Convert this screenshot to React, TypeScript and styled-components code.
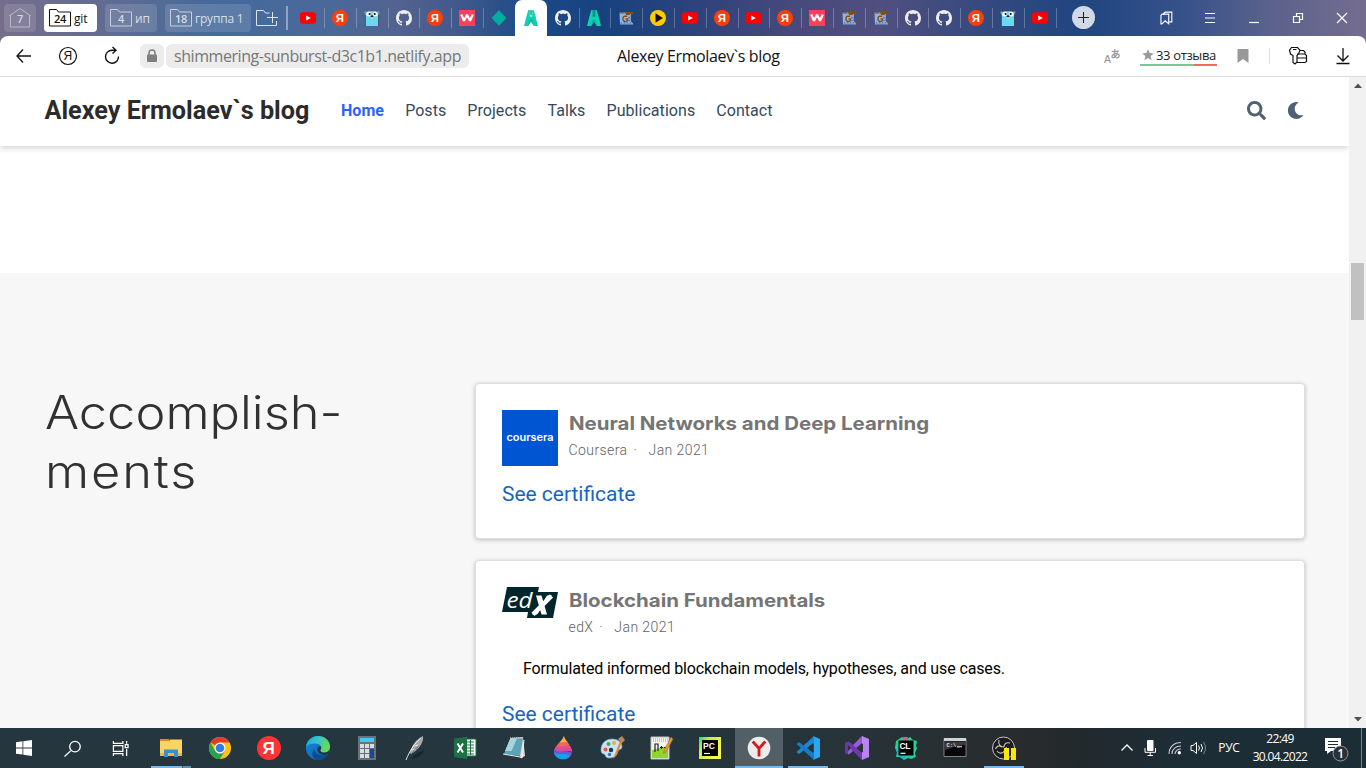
import React from "react";
import styled, { createGlobalStyle } from "styled-components";

const GlobalStyle = createGlobalStyle`
  * { box-sizing: border-box; }
  body { margin: 0; overflow: hidden; background: #fff; }
  svg { display: block; flex: none; overflow: visible; }
`;

const uiFont = `"Open Sans", "Noto Sans", sans-serif`;

const Screen = styled.div`
  width: 1366px;
  height: 768px;
  display: flex;
  flex-direction: column;
  overflow: hidden;
  font-family: ${uiFont};
  background: linear-gradient(90deg, #766e8b 0, #626c92 100px, #446a9c 220px, #4a699a 330px, #53628f 400px,
    #40598d 460px, #1c4a86 530px, #17427f 600px, #2c427b 690px, #484a7c 800px, #504f7f 880px, #364a7f 980px,
    #20457f 1080px, #35518a 1180px, #5b628c 1270px, #746d90 1366px);
`;

/* ---------- tab strip ---------- */

const TabStrip = styled.header`
  height: 36px;
  flex: none;
  display: flex;
  align-items: flex-start;
  padding-left: 4px;
`;

const Group = styled.div<{ $w: number; $gap: number; $active?: boolean }>`
  width: ${(p) => p.$w}px;
  height: 28px;
  margin: 4px ${(p) => p.$gap}px 0 0;
  padding-left: 4px;
  border-radius: 4px;
  display: flex;
  align-items: center;
  gap: 2px;
  flex: none;
  white-space: nowrap;
  background: ${(p) => (p.$active ? "#fff" : "rgba(255,255,255,.13)")};
  color: ${(p) => (p.$active ? "#111" : "rgba(255,255,255,.75)")};
  font-size: 12px;
  letter-spacing: -0.2px;
`;

const StripDivider = styled.div`
  width: 2px;
  height: 24px;
  margin: 6px 4.2px 0 8px;
  background: rgba(255, 255, 255, 0.4);
`;

const NewGroup = styled.div`
  padding-top: 10px;
`;

const Tab = styled.div<{ $active?: boolean; $line?: boolean }>`
  width: 31.82px;
  height: ${(p) => (p.$active ? 36 : 24)}px;
  margin-top: ${(p) => (p.$active ? 0 : 6)}px;
  padding-top: ${(p) => (p.$active ? 6 : 0)}px;
  flex: none;
  display: flex;
  justify-content: center;
  align-items: ${(p) => (p.$active ? "flex-start" : "center")};
  position: relative;
  border-radius: 7px 7px 0 0;
  background: ${(p) => (p.$active ? "#fff" : "none")};
  svg { margin-top: ${(p) => (p.$active ? 4 : 0)}px; }
  &::after {
    content: "";
    position: absolute;
    right: -1px;
    top: 2px;
    width: 1px;
    height: 20px;
    background: ${(p) => (p.$line ? "rgba(255,255,255,.25)" : "none")};
  }
`;

const AddTab = styled.div`
  width: 23px;
  height: 23px;
  margin: 6px 0 0 16.500px;
  border-radius: 50%;
  background: #d2d9e6;
  display: grid;
  place-items: center;
`;

const WindowButtons = styled.div`
  margin-left: auto;
  height: 36px;
  display: flex;
  padding-right: 2px;
`;

const WindowButton = styled.div`
  width: 44px;
  display: grid;
  place-items: center;
`;

/* ---------- address bar ---------- */

const Toolbar = styled.div`
  height: 41px;
  flex: none;
  background: #fff;
  border-radius: 8px 8px 0 0;
  border-bottom: 1px solid #dcdcdc;
  display: grid;
  grid-template-columns: 1fr auto 1fr;
  align-items: center;
`;

const ToolSide = styled.div<{ $end?: boolean }>`
  display: flex;
  align-items: center;
  height: 40px;
  justify-content: ${(p) => (p.$end ? "flex-end" : "flex-start")};
`;

const Tool = styled.div<{ $w?: number; $end?: number }>`
  width: ${(p) => p.$w ?? 44}px;
  margin-right: ${(p) => p.$end ?? 0}px;
  display: grid;
  place-items: center;
`;

const LockBox = styled.div`
  width: 24px;
  height: 24px;
  margin: 0 2px 0 6px;
  border-radius: 6px;
  background: #ececec;
  display: grid;
  place-items: center;
`;

const Url = styled.div`
  width: 303px;
  height: 24px;
  line-height: 24px;
  padding-left: 8px;
  border-radius: 6px;
  background: #ececec;
  color: #777;
  font-size: 16px;
  letter-spacing: -0.44px;
  white-space: nowrap;
`;

const PageTitle = styled.div`
  width: 164px;
  font-size: 16px;
  letter-spacing: -0.38px;
  color: #111;
  white-space: nowrap;
  margin-left: 32px;
`;

const Reviews = styled.div`
  width: 77px;
  height: 20px;
  display: flex;
  align-items: center;
  gap: 2px;
  padding-left: 2px;
  font-size: 13px;
  letter-spacing: -0.35px;
  color: #222;
  white-space: nowrap;
  border-bottom: 2px solid;
  border-image: linear-gradient(90deg, #78c796 70%, #ee6a5c 70%) 1;
`;

const ToolDivider = styled.div`
  width: 1px;
  height: 16px;
  background: #ddd;
`;

/* ---------- page ---------- */

const Viewport = styled.div`
  height: 651px;
  flex: none;
  display: flex;
  background: #fff;
  font-family: Roboto, sans-serif;
`;

const Page = styled.div`
  width: 1349px;
  height: 651px;
  overflow: hidden;
`;

const Navbar = styled.nav`
  position: relative;
  height: 69px;
  padding: 0 45px 2px 44.500px;
  display: flex;
  align-items: center;
  background: #fff;
  box-shadow: 0 2px 6px rgba(0, 0, 0, 0.18);
`;

const Brand = styled.div`
  width: 296.500px;
  font-size: 25.200px;
  font-weight: 700;
  color: #2b2b2b;
  white-space: nowrap;
`;

const NavLink = styled.a<{ $active?: boolean }>`
  margin-right: 21.100px;
  font-size: 16px;
  letter-spacing: 0.05px;
  font-weight: ${(p) => (p.$active ? 700 : 400)};
  color: ${(p) => (p.$active ? "#2962ff" : "#34495e")};
`;

const NavIcons = styled.div`
  margin-left: auto;
  display: flex;
  align-items: center;
  gap: 21px;
`;

const Section = styled.section`
  margin-top: 127px;
  height: 600px;
  padding: 110px 44px 0 45px;
  background: #f7f7f7;
  display: grid;
  grid-template-columns: 430px 830px;
`;

const Heading = styled.h1`
  margin: 0;
  font: 300 46px/59px Inter, sans-serif;
  color: #313131;
`;

const HeadingLine = styled.span<{ $spacing: number }>`
  display: block;
  width: 300px;
  letter-spacing: ${(p) => p.$spacing}px;
  transform: scaleX(1.1);
  transform-origin: left;
`;

const Cards = styled.div`
  display: flex;
  flex-direction: column;
  gap: 21px;
`;

const Card = styled.article<{ $h: number }>`
  height: ${(p) => p.$h}px;
  padding: 26px;
  background: #fff;
  border: 1px solid #dedede;
  border-radius: 4px;
  box-shadow: 0 1px 4px rgba(0, 0, 0, 0.24);
`;

const CardHead = styled.div`
  display: flex;
  gap: 10.500px;
  height: 56px;
`;

const CardTitle = styled.h4`
  margin: 2px 0 5px;
  font: 700 18.500px/23px Inter, sans-serif;
  color: #757575;
  white-space: nowrap;
  transform: scaleX(1.105);
  transform-origin: left;
`;

const Meta = styled.div`
  display: flex;
  font-size: 14px;
  line-height: 20px;
  letter-spacing: 0.42px;
  font-weight: 300;
  color: #626262;
`;

const Dot = styled.span`
  width: 21px;
  padding-left: 6px;
`;

const Description = styled.p`
  margin: 14px 0 0 21px;
  font-size: 16px;
  line-height: 24px;
  letter-spacing: -0.125px;
  color: #000;
`;

const CertLink = styled.a<{ $top: number }>`
  display: block;
  margin-top: ${(p) => p.$top}px;
  font-size: 20.950px;
  line-height: 30px;
  color: #1565c0;
`;

const Scrollbar = styled.div`
  width: 17px;
  background: #f1f1f1;
  display: flex;
  flex-direction: column;
  align-items: center;
  justify-content: space-between;
  padding: 6px 0;
`;

const Thumb = styled.div`
  width: 13px;
  height: 57px;
  margin: 0 0 223px;
  background: #c1c1c1;
`;

/* ---------- taskbar ---------- */

const Taskbar = styled.footer`
  height: 40px;
  flex: none;
  display: flex;
  color: #fff;
  background: linear-gradient(90deg, #26363f 0, #25363e 640px, #273338 860px, #282b2c 1030px, #22292d 1080px, #1d2d36 1180px, #1d2d36 100%);
`;

const SystemButtons = styled.div`
  display: flex;
  width: 147px;
`;

const Apps = styled.div`
  display: flex;
  gap: 1px;
`;

const TaskButton = styled.div<{ $bg?: boolean; $line?: "full" | "short" | "split" }>`
  position: relative;
  width: 48px;
  height: 40px;
  flex: none;
  display: grid;
  place-items: center;
  background: ${(p) => (p.$bg ? "#525f67" : "none")};
  &::after {
    content: "";
    position: absolute;
    bottom: 0;
    left: ${(p) => (p.$line === "full" ? 0 : 4)}px;
    right: ${(p) => (p.$line === "full" ? 0 : 4)}px;
    height: ${(p) => (p.$line ? 2 : 0)}px;
    background: ${(p) => (p.$line === "split" ? "linear-gradient(90deg,#76b9ed 31px,#3c5b70 31px,#3c5b70 32px,#5c90b5 32px)" : "#76b9ed")};
  }
`;

const Tray = styled.div`
  margin-left: auto;
  display: flex;
  align-items: center;
  font-size: 12px;
`;

const TrayItem = styled.div<{ $w: number; $tight?: boolean }>`
  width: ${(p) => p.$w}px;
  display: grid;
  place-items: center;
  letter-spacing: ${(p) => (p.$tight ? -0.65 : -0.3)}px;
  text-align: center;
  line-height: 18px;
  white-space: nowrap;
`;

const ShowDesktop = styled.div`
  width: 5px;
  height: 40px;
  border-left: 1px solid #77838a;
`;

/* ---------- drawings ---------- */

const YouTube = () => (
  <svg width="16" height="16" viewBox="0 0 16 16">
    <rect x="0" y="2.3" width="16" height="11.4" rx="2.6" fill="#f00" />
    <path d="M6.2 5.4v5.2l4.6-2.6z" fill="#fff" />
  </svg>
);

const Ya = ({ size = 16, color = "#fc3f0a" }: { size?: number; color?: string }) => (
  <svg width={size} height={size} viewBox="0 0 16 16">
    <circle cx="8" cy="8" r="8" fill={color} />
    <text x="7.8" y="12" textAnchor="middle" fontFamily="Liberation Sans, sans-serif" fontWeight="700" fontSize="11.4" fill="#fff">Я</text>
  </svg>
);

const Gopher = () => (
  <svg width="16" height="16" viewBox="0 0 16 16">
    <path d="M1.5 4.5V16h12.700V4.500C14 0 2 0 1.500 4.500z" fill="#6ad7f5" />
    <path d="M1.300 5v11M14.600 5v11" stroke="#444" strokeWidth=".8" />
    <circle cx="1.600" cy="2.500" r="1.300" fill="#5aa9bd" /><circle cx="14.200" cy="2.500" r="1.300" fill="#5aa9bd" />
    <circle cx="4.700" cy="4" r="2.500" fill="#fff" /><circle cx="11.200" cy="4" r="2.500" fill="#fff" />
    <circle cx="5.600" cy="4" r="1.100" fill="#111" /><circle cx="10.700" cy="4" r="1.100" fill="#111" />
    <ellipse cx="8" cy="6.300" rx="1.500" ry="1" fill="#222" />
    <path d="M6.500 7.200h3v1.500h-3z" fill="#dccba4" />
  </svg>
);

const GitHub = () => (
  <svg width="16" height="16" viewBox="0 0 16 16" fill="#eee">
    <path d="M8 0C3.58 0 0 3.58 0 8c0 3.54 2.290 6.530 5.470 7.590.4.070.550-.170.550-.380 0-.190-.010-.820-.010-1.490-2.010.370-2.530-.490-2.690-.940-.090-.230-.480-.940-.820-1.130-.280-.150-.680-.520-.010-.530.630-.010 1.080.580 1.230.820.720 1.210 1.870.870 2.330.660.070-.520.280-.870.510-1.070-1.780-.200-3.640-.890-3.640-3.950 0-.870.310-1.590.820-2.150-.080-.200-.360-1.020.080-2.120 0 0 .670-.210 2.200.820.640-.180 1.320-.270 2-.270s1.360.090 2 .270c1.530-1.040 2.200-.820 2.200-.820.440 1.100.160 1.920.080 2.120.510.560.820 1.270.820 2.150 0 3.070-1.870 3.750-3.650 3.950.290.250.540.730.540 1.480 0 1.070-.010 1.930-.010 2.200 0 .210.150.460.550.380A8.010 8.010 0 0 0 16 8c0-4.420-3.580-8-8-8z" />
  </svg>
);

const WIcon = () => (
  <svg width="16" height="16" viewBox="0 0 16 16">
    <rect width="16" height="16" fill="#ff3f58" />
    <path d="M2.200 4.500l2.800 6.200L8 4.700l3 6 2.800-6.200" fill="none" stroke="#fff" strokeWidth="2.200" strokeLinejoin="bevel" />
  </svg>
);

const Diamond = () => (
  <svg width="16" height="16" viewBox="0 0 16 16">
    <path d="M8 .2l7.500 7.800L8 15.800.5 8z" fill="#00ad9f" />
  </svg>
);

const Arrows = () => (
  <svg width="16" height="16" viewBox="0 0 16 16">
    <path d="M5.300 0h1.500v6.500h2.400V0h1.500l1.800 6L15 16h-4.200l-1.600-2.500L8 11.500l-1.200 2L5.200 16H1l2.500-10z" fill="#0fd0b0" />
    <path d="M7.200 0h1.600v5.500H7.200z" fill="#15a892" />
    <path d="M5.200 16L6.500 9.500h3l1.300 6.500L8 11.500z" fill="#12a994" opacity=".7" />
  </svg>
);

const GSheet = () => (
  <svg width="16" height="16" viewBox="0 0 16 16">
    <path d="M1.500 2.500h11.500v9l2 2v1h-13z" fill="#86b8ec" />
    <path d="M3 14.500v-2h1v2h2v-2h1v2h2v-2h1v2h2v-2h1v2" stroke="#4c78b8" strokeWidth=".6" fill="none" />
    <path d="M7 2h8v2h-3v1H8zM1.500 2.500h5v1h-5z" fill="#8b4a14" />
    <path d="M9.300 6.300h-3L5 7.500v2.600L6.300 11.500h2l1.200-1V9H7.500" stroke="#8f4a14" strokeWidth="1.400" fill="none" />
    <path d="M11 7v1.500M11 10v1.300" stroke="#8f4a14" strokeWidth="1.200" />
    <path d="M13 5v6" stroke="#315f9d" strokeWidth=".7" />
  </svg>
);

const PlayIcon = () => (
  <svg width="16" height="16" viewBox="0 0 16 16">
    <circle cx="8" cy="8" r="8" fill="#fc0" />
    <path d="M5.500 3.300v9.400L13 8z" fill="#111" />
  </svg>
);

const Folder = ({ n, dark }: { n: number; dark?: boolean }) => (
  <svg width="24" height="20" viewBox="0 0 24 20">
    <path d="M1.500 1.500h7l2 2.500h12v14h-21z" fill="none" stroke={dark ? "#111" : "#c5cfe0"} strokeWidth="1" />
    <text x="12" y="15.300" textAnchor="middle" fontFamily="Open Sans, sans-serif" fontWeight="600" fontSize="11" fill={dark ? "#111" : "#d5dce8"}>{n}</text>
  </svg>
);

const House = () => (
  <svg width="24" height="22" viewBox="0 0 24 22">
    <path d="M1 9L12 1.500 23 9M2.500 8v12h19V8" fill="none" stroke="#b9b8ca" />
    <text x="12" y="16" textAnchor="middle" fontFamily="Open Sans, sans-serif" fontWeight="600" fontSize="11" fill="#d6d5e0">7</text>
  </svg>
);

const favicons: Record<string, React.ReactNode> = {
  y: <YouTube />, r: <Ya />, o: <Gopher />, g: <GitHub />, w: <WIcon />, d: <Diamond />, a: <Arrows />, s: <GSheet />, p: <PlayIcon />,
};
const tabs = "yrogrwdAgaspyryrwssggroy".split("");

const line = (d: string, w = 18, color = "#fff", sw = 1.2) => (
  <svg width={w} height={w} viewBox="0 0 18 18" fill="none" stroke={color} strokeWidth={sw}>
    <path d={d} />
  </svg>
);

const CourseraLogo = () => (
  <svg width="56" height="56" viewBox="0 0 56 56">
    <rect width="56" height="56" fill="#0056d2" />
    <text x="4.500" y="30.800" textLength="47" lengthAdjust="spacingAndGlyphs" fontFamily="Inter, sans-serif" fontWeight="600" fontSize="10.300" fill="#fff">coursera</text>
  </svg>
);

const EdxLogo = () => (
  <svg width="56" height="31" viewBox="0 0 56 31">
    <path d="M5 0h32l-1 5h20l-5 26H25l1-6H0z" fill="#02262b" />
    <text x="4.500" y="21" fontFamily="Open Sans, sans-serif" fontStyle="italic" fontSize="22.500" textLength="26" lengthAdjust="spacingAndGlyphs" fill="#fff">ed</text>
    <path d="M31 27.300L49.500 8.800" stroke="#fff" strokeWidth="4.500" />
    <path d="M34 8.500h5.500l5.500 19h-5.500z" fill="#fff" />
    <path d="M30 27.500h5l2-2.500v-4zM45 8.500h5l-5.500 6-2-2z" fill="#fff" />
  </svg>
);

const icon24 = (children: React.ReactNode) => (
  <svg width="24" height="24" viewBox="0 0 24 24">{children}</svg>
);

const apps: { art: React.ReactNode; line?: "full" | "short" | "split"; bg?: boolean }[] = [
  { line: "split", art: icon24(<>
    <path d="M1 3h9v3H1z" fill="#d99400" /><path d="M1 5h9l1-1.500h12V20H1z" fill="#fcd462" />
    <path d="M1 17h22v3H1z" fill="#f0b93a" />
    <path d="M5 21v-7.500h14V21h-4v-4H9v4z" fill="#3a8fd0" /></>) },
  { art: icon24(<>
    <circle cx="12" cy="12" r="11" fill="#fbc116" />
    <path d="M12 12L2.470 6.500A11 11 0 0 1 21.530 6.500H12z" fill="#e33b2e" />
    <path d="M2.470 6.500A11 11 0 0 0 12 23l4.800-8.300L7.200 14.700z" fill="#2ba24c" />
    <circle cx="12" cy="12" r="5.500" fill="#fff" /><circle cx="12" cy="12" r="4.300" fill="#2f7de9" /></>) },
  { art: <Ya size={24} color="#ff3333" /> },
  { art: icon24(<>
    <defs>
      <linearGradient id="edgeTop" x1="0" y1="0" x2="1" y2=".4"><stop stopColor="#1aa0e6" /><stop offset=".5" stopColor="#36c6c8" /><stop offset="1" stopColor="#69d85c" /></linearGradient>
      <linearGradient id="edgeLow" x1="0" y1="0" x2="1" y2="1"><stop stopColor="#1593e6" /><stop offset="1" stopColor="#0c50a0" /></linearGradient>
    </defs>
    <circle cx="12" cy="12" r="12" fill="url(#edgeLow)" />
    <path d="M0 11C1 4 6 0 12 0c7 0 12 5 12 10.500 0 4-3 6-6 6-3.500 0-4.500-1.500-3-3 1.200-2-.5-6-5.500-6S1 9 0 11z" fill="url(#edgeTop)" />
    <path d="M8.500 13c0 5 5 7.500 10 6 2-.5 4-1.500 3-1-2 4-6 6-10 6-5-1-7-8-3-11z" fill="#114a8b" />
    <path d="M14.800 10.500c1 2-1.300 3.500 0 5 2 2 6 1.200 8.200-.5l.5 2.500-4 1.300c-6 .2-8.500-3-8-6.300.2-1.500 1.500-3 3.300-2z" fill="#26363f" /></>) },
  { art: icon24(<>
    <path d="M3 0h18v24H3z" fill="#697179" /><path d="M5 2h14v4H5z" fill="#3fc9f5" />
    {[8, 13, 18].map((y) => [5, 10, 15].map((x) => <rect key={`${x}-${y}`} x={x} y={y} width="4" height="4" fill="#d9dde1" />))}
    <path d="M15 13h4v9h-4z" fill="#154a8f" /></>) },
  { art: icon24(<>
    <path d="M7 23c7-1 12-5 13-9l-8 4z" fill="#18242a" />
    <path d="M6 17C7 9 13 3 19 0c1 5-3 13-12 18z" fill="#a6a9aa" />
    <path d="M2 24C6 14 11 7 17 2M7 14l5-1M10 10l5-1" stroke="#e6e6e6" strokeWidth="1" fill="none" />
    <path d="M8 17l4-5M12 14l3-5" stroke="#555" strokeWidth=".6" /></>) },
  { art: icon24(<>
    <path d="M12 3h11v17H12z" fill="#fff" stroke="#1d7044" />
    <path d="M14 6h7M14 9h7M14 12h7M14 15h7M14 18h7M17.500 4v15" stroke="#1d7044" />
    <path d="M1 2.500L14 .8v22.400L1 21z" fill="#1d7044" />
    <path d="M4.500 7.500l5.500 9M10 7.500l-5.500 9" stroke="#fff" strokeWidth="2" /></>) },
  { art: icon24(<>
    <path d="M8 2l13-1 2 19-4 2z" fill="#dedbd3" /><path d="M8 3l13-1-3 18-16-2z" fill="#5ea4b8" />
    <path d="M8 3l7-.5L9.500 15 3 15z" fill="#a6d5df" /><path d="M1 18l17 3 2 1 2-18" fill="none" stroke="#efefef" strokeWidth="1" />
    <path d="M8 2h13" stroke="#bbb" strokeWidth="1.500" strokeDasharray="1 1" /></>) },
  { art: icon24(<>
    <path d="M13 0C12 5 4 9 3 15h18c0-6-8-9-8-15z" fill="#ef4c88" />
    <path d="M13 0c-1 3-3 5-4.500 6.500C12 7 14 6 16.500 6 14.500 4 13.300 2 13 0z" fill="#fbbc11" />
    <path d="M8.500 6.500C12 7 14 6 16.500 6l2 3C14 9 10 12 5.500 10z" fill="#f2685f" />
    <path d="M5 10.500c5 3.500 12-1.500 15.500 3l.5 3C17 12 8 20 3.500 14z" fill="#d94a9b" />
    <path d="M3.700 13c4 5 12 0 17.300 4-1 8-18 8-18-1z" fill="#6759d6" />
    <path d="M3 16c4 4 11 0 16 4-3 5-14 5-16-4z" fill="#14a3ec" /></>) },
  { art: icon24(<>
    <path d="M1 14C1 7 6 3 12 3c7 0 10 4 10 8 0 3-4 2-5 5s-2 6-8 6c-4 0-3-3-5-4-2 0-3-2-3-4z" fill="#c7e3f4" stroke="#7da7c4" strokeWidth=".7" />
    <circle cx="5.500" cy="13.500" r="2" fill="#df5a4d" /><circle cx="8.500" cy="8" r="2" fill="#4aaa4d" /><circle cx="14" cy="7" r="2" fill="#e0b33d" /><circle cx="11" cy="14" r="2.200" fill="#26363f" /><circle cx="9.500" cy="18.500" r="1.800" fill="#3c74d0" />
    <path d="M20 5L13 23l4-4 5-13z" fill="#e18b35" /><path d="M18 3l4-3 3 4-3 3z" fill="#bd8660" /></>) },
  { art: icon24(<>
    <path d="M2 1h18v22H2z" fill="#f4f4ee" stroke="#bbb" /><path d="M3 14l16-4v12H3z" fill="#8ed62e" /><path d="M4 3h15M4 5h15" stroke="#999" strokeDasharray="1 1" />
    <path d="M6 16V8h3v7M11 11.500h3M12.500 10v3M15 11.500h3" stroke="#222" strokeWidth="1.200" fill="none" />
    <path d="M22 1l2 2-7 13-2.500 1.500.5-3z" fill="#e69a32" stroke="#9c621d" strokeWidth=".5" /></>) },
  { art: icon24(<>
    <defs><linearGradient id="pc" x1="0" y1="0" x2="1" y2=".7"><stop stopColor="#21d789" /><stop offset=".35" stopColor="#c9ee4a" /><stop offset="1" stopColor="#fcf84a" /></linearGradient></defs>
    <path d="M1 1h22v22H1z" fill="url(#pc)" /><path d="M4 4h16v16H4z" fill="#000" />
    <text x="5" y="12.500" fontFamily="Liberation Sans, sans-serif" fontWeight="700" fontSize="8.500" fill="#fff" textLength="12">PC</text><path d="M6 17.500h6" stroke="#fff" strokeWidth="1.200" /></>) },
  { line: "full", bg: true, art: icon24(<>
    <circle cx="12" cy="12" r="11.300" fill="#ececec" />
    <path d="M5.700 5.500l6.300 7 6.300-7M12 12v8.500" fill="none" stroke="#d8161c" strokeWidth="2.800" /></>) },
  { line: "short", art: icon24(<>
    <path d="M17 0l7 3v18l-7 3z" fill="#2ba7f0" /><path d="M18 0v6.500L3 18 .500 16z" fill="#1b8ad4" /><path d="M18 24v-6.500L3 6 .500 8z" fill="#167dc5" /><path d="M17.800 7v10L12 12z" fill="#26343a" /></>) },
  { art: icon24(<>
    <path d="M17 0l7 3v18l-7 3z" fill="#b983f0" /><path d="M17 0v7L4 18.500 0 17z" fill="#9b59d6" /><path d="M17 24v-7L4 5.500 0 7z" fill="#7138ad" /><path d="M0 7l3-1.500v13L0 17z" fill="#6a34a2" /><path d="M3 9v6l3-3zM18 7.500v9L12.500 12z" fill="#26343a" /></>) },
  { art: icon24(<>
    <path d="M2 5l6-4 3 3 5-3 3 3 4 1-1 5 1 2-2 5 1 4-5 2-3-1-4 2-4-3-4 0 1-5-2-4z" fill="#23d192" />
    <path d="M9 1h5l-2 4H9z" fill="#ee4f94" /><path d="M2 14l2 5 7 4v-4H6v-8z" fill="#1bb6d6" />
    <path d="M4.500 4.500h15v15h-15z" fill="#000" />
    <text x="5.500" y="12.500" fontFamily="Liberation Sans, sans-serif" fontWeight="700" fontSize="8.500" fill="#fff" textLength="11">CL</text><path d="M6.500 17.300h5" stroke="#fff" strokeWidth="1.200" /></>) },
  { art: icon24(<>
    <path d="M1 2.500h22v18H1z" fill="#080808" stroke="#999" strokeWidth=".8" /><path d="M1 2h22v3H1z" fill="#d0d3d5" />
    <path d="M1.500 5.500h21V9C15 9 8 12 1.500 14z" fill="#3c3c3c" />
    <text x="3.500" y="11" fontFamily="Liberation Mono, monospace" fontWeight="700" fontSize="5.500" fill="#ddd">C:\_</text><path d="M14 10.700h5" stroke="#ddd" /></>) },
  { line: "short", art: icon24(<>
    <circle cx="11.500" cy="12" r="11" fill="#1c1b1f" stroke="#c4c4c4" strokeWidth="1" />
    <path d="M7 4c-1 4 1 7 5 7M18 7c-4-1-6 1-6 4M5 15c2 3 6 3 8-1M3.500 13c1-3 4-4 6-2M12 19c4-2 4-5 2-8" fill="none" stroke="#c4c4c4" strokeWidth="1.100" />
    <path d="M12 12h5v12h-5zM19 12h5v12h-5z" fill="#fbe60a" /></>) },
];

/* ---------- screen ---------- */

export default function App() {
  return (
    <Screen>
      <GlobalStyle />
      <TabStrip>
        <Group $w={32} $gap={8}><House /></Group>
        <Group $w={53} $gap={8} $active><Folder n={24} dark />git</Group>
        <Group $w={52} $gap={8}><Folder n={4} />ип</Group>
        <Group $w={86} $gap={5}><Folder n={18} />группа 1</Group>
        <NewGroup>
          <svg width="22" height="17" viewBox="0 0 22 17" fill="none" stroke="#dbe3ee">
            <path d="M20.500 11v4.500H.5V.5h7l2 2.500h4M16.500 2v11M11 7.500h11" />
          </svg>
        </NewGroup>
        <StripDivider />
        {tabs.map((t, i) => (
          <Tab key={i} $active={t === "A"} $line={i !== 6 && i !== 7}>{favicons[t.toLowerCase()]}</Tab>
        ))}
        <AddTab>{line("M9 1.500v15M1.500 9h15", 13, "#222", 1.5)}</AddTab>
        <WindowButtons>
          <WindowButton>{line("M6 5V3L8 1.500h8.500v12.500h-3M2.500 5.500l1.500-1.500h8.500v12.500L8 12.500l-4.500 4h-1z", 14, "#fff", 1.4)}</WindowButton>
          <WindowButton>{line("M4 4.500h10M4 9h10M4 13.500h10", 18)}</WindowButton>
          <WindowButton>{line("M4 13.500h10", 18)}</WindowButton>
          <WindowButton>{line("M4.500 7.500h6v6h-6zM7.500 7.500v-3h6v6h-3", 18)}</WindowButton>
          <WindowButton>{line("M4 4l10 10M14 4L4 14", 18)}</WindowButton>
        </WindowButtons>
      </TabStrip>

      <Toolbar>
        <ToolSide>
          <Tool $w={46}>{line("M17 9H3M9 2.500L3 9 9 15.500", 18, "#111", 1.3)}</Tool>
          <Tool>
            <svg width="20" height="20" viewBox="0 0 20 20">
              <circle cx="10" cy="10" r="8.500" fill="none" stroke="#111" strokeWidth="1.200" />
              <text x="9.800" y="14.300" textAnchor="middle" fontFamily="Liberation Sans, sans-serif" fontSize="12" fill="#111">Я</text>
            </svg>
          </Tool>
          <Tool>{line("M15.500 9.500A6.500 6.500 0 1 1 9 3.200h3.500M9.500 0l3.500 3.200L9.500 6.500", 18, "#111", 1.4)}</Tool>
          <LockBox>
            <svg width="12" height="14" viewBox="0 0 12 14">
              <path d="M3 6V4a3 3 0 0 1 6 0v2" fill="none" stroke="#7f7f7f" strokeWidth="1.500" />
              <rect x="1" y="5.500" width="10" height="7.500" rx="1" fill="#7f7f7f" />
            </svg>
          </LockBox>
          <Url>shimmering-sunburst-d3c1b1.netlify.app</Url>
        </ToolSide>
        <PageTitle>Alexey Ermolaev`s blog</PageTitle>
        <ToolSide $end>
          <Tool $w={56}>
            <svg width="18" height="16" viewBox="0 0 18 16">
              <text x="1" y="14.500" fontFamily="Liberation Sans, sans-serif" fontSize="10.500" fill="#8f8f8f">A</text>
              <text x="7.500" y="10" fontFamily="Noto Sans CJK JP, sans-serif" fontSize="10" fontWeight="700" fill="#999">あ</text>
            </svg>
          </Tool>
          <Reviews>
            <svg width="12" height="12" viewBox="0 0 12 12"><path d="M6 .3l1.600 3.800 4.200.3-3.200 2.700 1 4.100L6 9l-3.600 2.200 1-4.100L.2 4.400l4.200-.3z" fill="#999" /></svg>
            33 отзыва
          </Reviews>
          <Tool $w={50} $end={-1}>
            <svg width="12" height="14" viewBox="0 0 12 14"><path d="M2 0h10q.500 0 .500 .500V14L7 10 1.500 14V.500Q1.500 0 2 0z" fill="#999" /></svg>
          </Tool>
          <Tool $w={3} />
          <ToolDivider />
          <Tool $w={56}>
            <svg width="20" height="20" viewBox="0 0 20 20" fill="none" stroke="#111" strokeWidth="1.200">
              <path d="M3.500 1.500h6L12 4.200 10.500 8 9 9.500V16l-2 2-2-1.500V9.500L2.500 8 1.500 4.200zM5 3.500h3.500M11.500 4.500h4L17 6v2M9 8h8l1.500 1.500v6L17 16.500H9M9.500 12h9" />
            </svg>
          </Tool>
          <Tool $w={33} $end={7}>{line("M9 1v12.500M3.500 8.500L9 14l5.500-5.500M2.500 16.500h13", 18, "#111", 1.3)}</Tool>
        </ToolSide>
      </Toolbar>

      <Viewport>
        <Page>
          <Navbar>
            <Brand>Alexey Ermolaev`s blog</Brand>
            <NavLink $active>Home</NavLink>
            <NavLink>Posts</NavLink>
            <NavLink>Projects</NavLink>
            <NavLink>Talks</NavLink>
            <NavLink>Publications</NavLink>
            <NavLink>Contact</NavLink>
            <NavIcons>
              <svg width="19" height="19" viewBox="0 0 512 512" fill="#4f6275"><path d="M505 442.700L405.300 343c-4.500-4.500-10.600-7-17-7H372c27.600-35.300 44-79.700 44-128C416 93.100 322.900 0 208 0S0 93.100 0 208s93.100 208 208 208c48.300 0 92.700-16.400 128-44v16.300c0 6.400 2.500 12.500 7 17l99.700 99.700c9.400 9.400 24.600 9.400 33.900 0l28.300-28.300c9.400-9.400 9.400-24.600.1-34zM208 336c-70.700 0-128-57.200-128-128 0-70.700 57.200-128 128-128 70.700 0 128 57.200 128 128 0 70.700-57.200 128-128 128z" /></svg>
              <svg width="17" height="17" viewBox="0 0 512 512" fill="#4f6275"><path d="M283.200 512c79 0 151.100-35.900 198.900-94.800 7.100-8.700-.6-21.500-11.600-19.400-124.200 23.700-238.300-71.600-238.300-197 0-72.200 38.700-138.600 101.500-174.400 9.700-5.500 7.300-20.200-3.800-22.200A258.200 258.200 0 0 0 283.200 0c-141.300 0-256 114.500-256 256 0 141.300 114.500 256 256 256z" /></svg>
            </NavIcons>
          </Navbar>
          <Section>
            <Heading>
              <HeadingLine $spacing={0}>Accomplish-</HeadingLine>
              <HeadingLine $spacing={1.7}>ments</HeadingLine>
            </Heading>
            <Cards>
              <Card $h={156}>
                <CardHead>
                  <CourseraLogo />
                  <div>
                    <CardTitle>Neural Networks and Deep Learning</CardTitle>
                    <Meta>Coursera<Dot>·</Dot>Jan 2021</Meta>
                  </div>
                </CardHead>
                <CertLink $top={13}>See certificate</CertLink>
              </Card>
              <Card $h={220}>
                <CardHead>
                  <EdxLogo />
                  <div>
                    <CardTitle>Blockchain Fundamentals</CardTitle>
                    <Meta>edX<Dot>·</Dot>Jan 2021</Meta>
                  </div>
                </CardHead>
                <Description>Formulated informed blockchain models, hypotheses, and use cases.</Description>
                <CertLink $top={18}>See certificate</CertLink>
              </Card>
            </Cards>
          </Section>
        </Page>
        <Scrollbar>
          <svg width="8" height="5" viewBox="0 0 8 5"><path d="M0 5l4-4.500L8 5z" fill="#505050" /></svg>
          <Thumb />
          <svg width="8" height="5" viewBox="0 0 8 5"><path d="M0 0l4 4.500L8 0z" fill="#505050" /></svg>
        </Scrollbar>
      </Viewport>

      <Taskbar>
        <SystemButtons>
          <TaskButton>
            <svg width="16" height="16" viewBox="0 0 16 16" fill="#fff"><path d="M0 2.300l6.500-1v6.200H0zM7.300 1.200L16 0v7.500H7.300zM0 8.400h6.500v6.200L0 13.700zM7.300 8.400H16V16l-8.700-1.200z" /></svg>
          </TaskButton>
          <TaskButton>{line("M.5 17.500L7 11.500M6 7a5.600 5.600 0 1 0 11.200 0a5.600 5.600 0 1 0-11.200 0", 17, "#fff", 1.4)}</TaskButton>
          <TaskButton>{line("M1.500 1v2.500h10V1M1.500 17v-2.500h10V17M1.500 6h10v6h-10zM15.500 1v3M15.500 9.500V17M14 5h3v3h-3z", 17, "#fff", 1.3)}</TaskButton>
        </SystemButtons>
        <Apps>
          {apps.map((a, i) => (
            <TaskButton key={i} $line={a.line} $bg={a.bg}>{a.art}</TaskButton>
          ))}
        </Apps>
        <Tray>
          <TrayItem $w={18}>{line("M3.500 11.500L9 6l5.500 5.500", 18, "#fff", 1.3)}</TrayItem>
          <TrayItem $w={28}>
            <svg width="12" height="16" viewBox="0 0 12 16"><rect x="3" y="0" width="6.500" height="11" rx="1" fill="#fff" /><path d="M1 8v4.300h10.500V8M6.200 12.500V15M3.500 15.500h5.500" fill="none" stroke="#fff" /></svg>
          </TrayItem>
          <TrayItem $w={22}>
            <svg width="14" height="14" viewBox="0 0 14 14" fill="none" stroke="#c9ced1"><path d="M1 13C1 6 6 1.500 13 1.500M4 13c0-5 4-8 9-8M7 13c0-3 3-5 6-5" strokeWidth="1.100" /><circle cx="11.300" cy="11.800" r="1.700" fill="#fff" stroke="none" /></svg>
          </TrayItem>
          <TrayItem $w={24}>
            <svg width="17" height="14" viewBox="0 0 17 14" fill="none" stroke="#fff"><path d="M1 4.500h2l3.500-3v11L3 9.500H1zM8.500 4.500q2 2.500 0 5M11 3q3 4 0 8" /><path d="M13.500 1q4 6 0 12" stroke="#7b868c" /></svg>
          </TrayItem>
          <TrayItem $w={38}>РУС</TrayItem>
          <TrayItem $w={64} $tight>22:49<br />30.04.2022</TrayItem>
          <TrayItem $w={49}>
            <svg width="26" height="26" viewBox="0 0 26 26">
              <path d="M1 3h16v13H7l-4 3v-3H1z" fill="#fff" /><path d="M4 6.500h10M4 9.500h10M4 12.500h7" stroke="#1d2d36" />
              <circle cx="16.500" cy="18.500" r="7.500" fill="#2c3135" stroke="#8f979b" />
              <text x="16.500" y="22.800" textAnchor="middle" fontFamily="Open Sans, sans-serif" fontWeight="600" fontSize="12" fill="#fff">1</text>
            </svg>
          </TrayItem>
          <ShowDesktop />
        </Tray>
      </Taskbar>
    </Screen>
  );
}
